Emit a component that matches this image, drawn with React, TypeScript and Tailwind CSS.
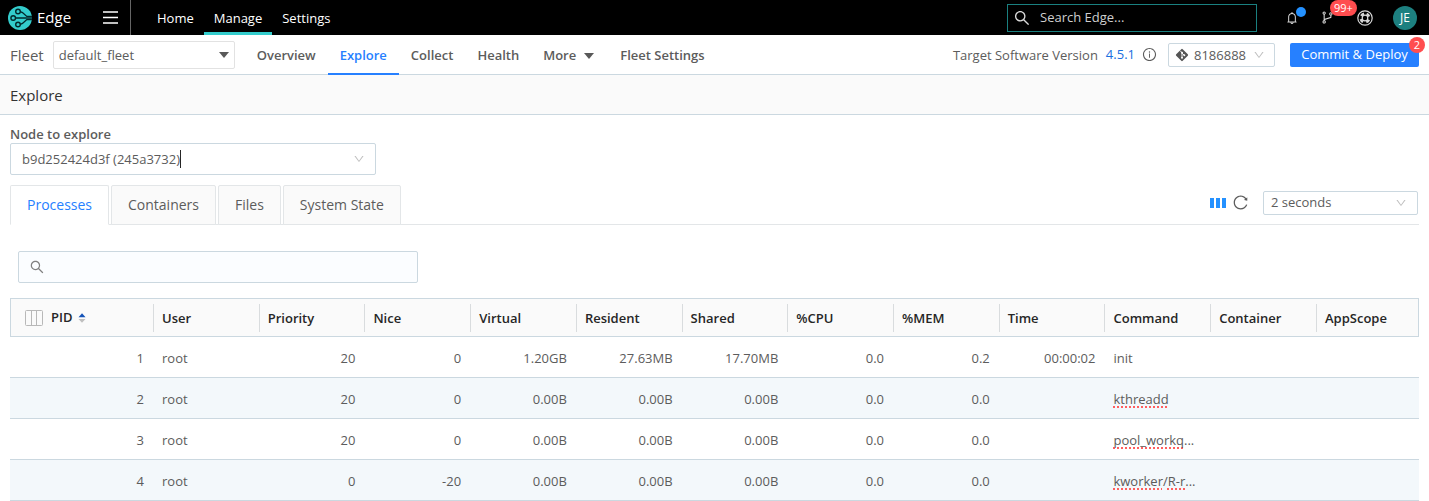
import { ReactNode } from "react";
import clsx from "clsx";
import {
  AiOutlineBell,
  AiOutlineBranches,
  AiOutlineDown,
  AiOutlineInfoCircle,
  AiOutlineReload,
  AiOutlineSearch,
} from "react-icons/ai";

const mainNav = ["Home", "Manage", "Settings"];
const fleetNav = ["Overview", "Explore", "Collect", "Health", "More", "Fleet Settings"];
const tabs = ["Processes", "Containers", "Files", "System State"];

const columns = [
  { key: "pid", label: "PID", numeric: true },
  { key: "user", label: "User" },
  { key: "priority", label: "Priority", numeric: true },
  { key: "nice", label: "Nice", numeric: true },
  { key: "virtual", label: "Virtual", numeric: true },
  { key: "resident", label: "Resident", numeric: true },
  { key: "shared", label: "Shared", numeric: true },
  { key: "cpu", label: "%CPU", numeric: true },
  { key: "mem", label: "%MEM", numeric: true },
  { key: "time", label: "Time", numeric: true },
  { key: "command", label: "Command" },
  { key: "container", label: "Container" },
  { key: "appscope", label: "AppScope" },
];

const misspelled =
  "underline decoration-dotted decoration-2 decoration-[#ff5f5f] underline-offset-2 [text-decoration-skip-ink:none]";

const rows: Record<string, ReactNode>[] = [
  {
    pid: 1, user: "root", priority: 20, nice: 0,
    virtual: "1.20GB", resident: "27.63MB", shared: "17.70MB",
    cpu: "0.0", mem: "0.2", time: "00:00:02",
    command: "init",
  },
  {
    pid: 2, user: "root", priority: 20, nice: 0,
    virtual: "0.00B", resident: "0.00B", shared: "0.00B",
    cpu: "0.0", mem: "0.0",
    command: <span className={misspelled}>kthreadd</span>,
  },
  {
    pid: 3, user: "root", priority: 20, nice: 0,
    virtual: "0.00B", resident: "0.00B", shared: "0.00B",
    cpu: "0.0", mem: "0.0",
    command: (
      <>
        <span className={misspelled}>pool_workq</span>...
      </>
    ),
  },
  {
    pid: 4, user: "root", priority: 0, nice: -20,
    virtual: "0.00B", resident: "0.00B", shared: "0.00B",
    cpu: "0.0", mem: "0.0",
    command: (
      <>
        <span className={misspelled}>kworker</span>/
        <span className={misspelled}>R-r</span>...
      </>
    ),
  },
];

function Logo() {
  return (
    <svg viewBox="0 0 24 24" className="size-6" aria-hidden="true">
      <circle cx="12" cy="12" r="12" fill="#33cccc" />
      <g fill="none" stroke="#03282b" strokeWidth="1.4">
        <circle cx="10" cy="5.5" r="2.3" />
        <circle cx="5.2" cy="12" r="2.3" />
        <circle cx="10" cy="18.5" r="2.3" />
        <path d="M12.3 5.7 14.5 6.5 18.8 10.4H24M7.5 12H24M12.3 18.3 14.5 17.5 18.8 13.6H24" />
      </g>
    </svg>
  );
}

function Triangle() {
  return (
    <svg viewBox="0 0 10 6" className="h-[6px] w-[10px]" aria-hidden="true">
      <path d="M0 0h10L5 6z" fill="#595959" />
    </svg>
  );
}

function GitIcon() {
  return (
    <svg viewBox="0 0 14 14" className="size-[14px]" aria-hidden="true">
      <rect x="2.4" y="2.4" width="9.2" height="9.2" rx="1" transform="rotate(45 7 7)" fill="#555" />
      <path d="M5 2.6 7 4.6V10M7 5l2.4 2.4" fill="none" stroke="#fff" strokeWidth="0.9" />
      <circle cx="7" cy="4.7" r="1" fill="#fff" />
      <circle cx="9.3" cy="7.2" r="1" fill="#fff" />
      <circle cx="7" cy="9.7" r="1" fill="#fff" />
    </svg>
  );
}

function LifeRing() {
  return (
    <svg viewBox="0 0 16 16" className="size-4" fill="none" stroke="currentColor" aria-hidden="true">
      <circle cx="8" cy="8" r="7.2" strokeWidth="1.2" />
      <circle cx="8" cy="8" r="2.8" strokeWidth="1.2" />
      <path
        d="M8 3.6A4.4 4.4 0 0 1 8 12.4 4.4 4.4 0 0 1 8 3.6"
        strokeWidth="2.4"
        strokeDasharray="3.456 3.456"
        strokeDashoffset="-1.728"
      />
    </svg>
  );
}

function TopBar() {
  return (
    <header className="flex h-[35px] items-center bg-black text-white">
      <div className="flex h-full w-[131px] items-center border-r border-[#666] pl-2">
        <Logo />
        <span className="ml-[5px] text-[15px] font-medium">Edge</span>
        <button type="button" aria-label="Menu" className="ml-auto mr-3">
          <svg viewBox="0 0 15 13" className="h-[13px] w-[15px]" stroke="#fff" strokeWidth="1.4">
            <path d="M0 1h15M0 6.5h15M0 12h15" />
          </svg>
        </button>
      </div>
      <nav className="ml-4 flex h-full text-[13px] font-semibold">
        {mainNav.map((item) => (
          <a
            key={item}
            href="#"
            className={clsx(
              "flex items-center border-b-3 px-[10px] pt-[5px] font-medium text-[13px]",
              item === "Manage" ? "border-[#33cccc]" : "border-transparent"
            )}
          >
            {item}
          </a>
        ))}
      </nav>
      <label className="ml-auto flex h-7 w-[250px] items-center border border-[#1a8080] pl-[5px] text-[#d9d9d9]">
        <AiOutlineSearch className="size-[18px] shrink-0" />
        <input
          type="text"
          aria-label="Search Edge"
          placeholder="Search Edge..."
          className="ml-[9px] w-full text-[13px] outline-none placeholder:text-[#cfcfcf]"
        />
      </label>
      <div className="ml-7 flex items-center text-[#d9d9d9]">
        <button type="button" aria-label="Notifications" className="relative">
          <AiOutlineBell className="size-[14px]" />
          <span className="absolute -top-1 left-[11px] size-[10px] rounded-full bg-[#2491ff]" />
        </button>
        <button type="button" aria-label="Branches" className="relative ml-[21px]">
          <AiOutlineBranches className="size-[15px]" />
          <span className="absolute -top-[10px] left-[10px] flex h-4 items-center rounded-full bg-[#ff4d4f] px-1 text-[11px] font-medium leading-4 text-white">
            99+
          </span>
        </button>
        <button type="button" aria-label="Help" className="ml-[22px]">
          <LifeRing />
        </button>
        <button
          type="button"
          className="ml-5 mr-3 size-6 rounded-full bg-[#1d8080] text-[12px] font-medium text-white"
        >
          JE
        </button>
      </div>
    </header>
  );
}

function FleetBar() {
  return (
    <div className="flex h-10 items-center border-b border-[#cbd8e0] px-[10px] text-[#5c5c5c]">
      <label htmlFor="fleet" className="pt-[2px] text-[15px] font-medium">
        Fleet
      </label>
      <div className="relative ml-[9px] flex items-center">
        <select
          id="fleet"
          className="h-7 w-[182px] appearance-none rounded-[2px] border border-[#e2e2e2] bg-white pl-[5px] pt-[2px] text-[13px]"
        >
          <option>default_fleet</option>
        </select>
        <span className="pointer-events-none absolute right-[6px]">
          <Triangle />
        </span>
      </div>
      <nav className="ml-[10px] flex h-10 self-start text-[13px] font-semibold">
        {fleetNav.map((item) => (
          <a
            key={item}
            href="#"
            className={clsx(
              "flex items-center border-b-2 px-3 pt-[4px]",
              item === "Explore" ? "border-[#2680ff] text-[#2680ff]" : "border-transparent"
            )}
          >
            {item}
            {item === "More" && (
              <span className="mx-2 mr-[2px]">
                <Triangle />
              </span>
            )}
          </a>
        ))}
      </nav>
      <div className="ml-auto flex items-center text-[13px]">
        <span className="pt-[2px]">Target Software Version</span>
        <a href="#" className="ml-2 font-medium text-[#1a6fe0]">
          4.5.1
        </a>
        <AiOutlineInfoCircle className="ml-[7px] size-[15px]" />
        <div className="relative ml-[11px] flex items-center">
          <span className="pointer-events-none absolute left-[7px]">
            <GitIcon />
          </span>
          <select
            aria-label="Commit"
            className="h-6 w-[107px] appearance-none rounded-[2px] border border-[#cbd8e0] bg-white pl-[25px] pt-[2px]"
          >
            <option>8186888</option>
          </select>
          <AiOutlineDown className="pointer-events-none absolute right-[10px] size-3 text-[#bfbfbf]" />
        </div>
        <button
          type="button"
          className="relative ml-[15px] h-6 w-[129px] rounded-[2px] bg-[#2680ff] font-medium text-white"
        >
          Commit &amp; Deploy
          <span className="absolute -right-[6px] -top-[6px] size-4 rounded-full bg-[#ff4d4f] text-[11px] font-normal leading-4">
            2
          </span>
        </button>
      </div>
    </div>
  );
}

function SortIcon() {
  return (
    <svg viewBox="0 0 8 10" className="h-[10px] w-2" aria-hidden="true">
      <path d="M.5 4.3 4 .3l3.5 4z" fill="#1553b8" />
      <path d="M.5 6h7L4 9.7z" fill="#bfbfbf" />
    </svg>
  );
}

function ColumnsIcon() {
  return (
    <svg viewBox="0 0 18 16" className="h-4 w-[18px]" fill="none" stroke="#b8b8b8" aria-hidden="true">
      <rect x=".5" y=".5" width="17" height="15" rx="1" />
      <path d="M6.5 0v16M11.5 0v16" />
    </svg>
  );
}

function ProcessTable() {
  return (
    <table className="mt-[15px] w-full table-fixed border-separate border-spacing-0 text-[13px]">
      <thead>
        <tr className="h-[39px] bg-[#fafafa] text-[#262626]">
          {columns.map((col, i) => (
            <th
              key={col.key}
              className={clsx(
                "border-y border-[#cbd8e0] p-0 text-left font-semibold",
                i === 0 && "w-[143px] border-l",
                i === columns.length - 1 && "w-[103px] border-r"
              )}
            >
              {i === 0 ? (
                <div className="flex items-center pl-[14px]">
                  <ColumnsIcon />
                  <span className="ml-2 mr-[5px] pt-px">PID</span>
                  <SortIcon />
                </div>
              ) : (
                <div className="flex h-7 items-center border-l border-[#d9dcde] pl-2 pt-[2px]">{col.label}</div>
              )}
            </th>
          ))}
        </tr>
      </thead>
      <tbody>
        {rows.map((row, i) => (
          <tr key={i} className="h-[41px] text-[#5c5c5c] even:bg-[#f3f8fb]">
            {columns.map((col) => (
              <td
                key={col.key}
                className={clsx(
                  "whitespace-nowrap border-b border-[#cbd8e0] px-[9px] py-0 pt-[4px]",
                  col.numeric && "text-right"
                )}
              >
                {row[col.key]}
              </td>
            ))}
          </tr>
        ))}
      </tbody>
    </table>
  );
}

export default function App() {
  return (
    <div className="bg-white font-['Open_Sans',sans-serif] text-[#5c5c5c]">
      <TopBar />
      <FleetBar />
      <h1 className="flex h-10 items-center border-b border-[#cbd8e0] bg-[#fafafa] px-[10px] pt-[2px] text-[15px] text-[#333]">
        Explore
      </h1>
      <main className="px-[10px] pt-[10px]">
        <label htmlFor="node" className="block text-[13px] font-semibold leading-[18px]">
          Node to explore
        </label>
        <div className="flex h-8 w-[366px] items-center rounded-[2px] border border-[#cbd8e0] pl-[11px] pr-[10px]">
          <input
            id="node"
            type="text"
            role="combobox"
            defaultValue="b9d252424d3f (245a3732)"
            className="field-sizing-content pt-[2px] text-[13px] outline-none"
          />
          <span className="h-[18px] w-px bg-[#262626]" />
          <AiOutlineDown className="ml-auto size-3 text-[#bfbfbf]" />
        </div>

        <div className="mt-[10px] flex items-center justify-between border-b border-[#e3e6e8]">
          <div role="tablist" className="-mb-px flex gap-[2px] text-[14px]">
            {tabs.map((tab, i) => (
              <button
                key={tab}
                type="button"
                role="tab"
                aria-selected={i === 0}
                className={clsx(
                  "h-10 rounded-t-[2px] border px-4 pb-[2px]",
                  i === 0
                    ? "border-[#e3e6e8] border-b-white bg-white font-medium text-[#2680ff]"
                    : "border-[#e3e6e8] bg-[#fafafa]"
                )}
              >
                {tab}
              </button>
            ))}
          </div>
          <div className="mr-px flex items-center pb-1">
            <button type="button" aria-label="Columns" className="flex gap-[2px]">
              <span className="h-[10px] w-1 bg-[#2491ff]" />
              <span className="h-[10px] w-1 bg-[#2491ff]" />
              <span className="h-[10px] w-1 bg-[#2491ff]" />
            </button>
            <button type="button" aria-label="Refresh" className="ml-[6px]">
              <AiOutlineReload className="size-[17px]" />
            </button>
            <div className="relative ml-[14px] flex items-center">
              <select
                aria-label="Refresh interval"
                className="h-6 w-[155px] appearance-none rounded-[2px] border border-[#cbd8e0] bg-white pl-[7px] text-[13px]"
              >
                <option>2 seconds</option>
              </select>
              <AiOutlineDown className="pointer-events-none absolute right-[11px] size-3 text-[#bfbfbf]" />
            </div>
          </div>
        </div>

        <label className="ml-2 mt-[26px] flex h-8 w-[400px] items-center rounded-[2px] border border-[#cbd8e0] bg-[#fbfdff] pl-[10px]">
          <AiOutlineSearch className="size-4 shrink-0 text-[#808080]" />
          <input type="text" aria-label="Filter processes" className="ml-2 w-full text-[13px] outline-none" />
        </label>

        <ProcessTable />
      </main>
    </div>
  );
}
